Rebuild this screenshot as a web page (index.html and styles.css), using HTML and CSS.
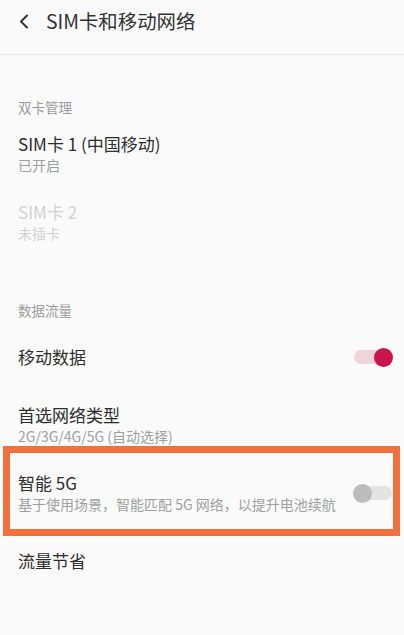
FILE: index.html
```html
<!DOCTYPE html>
<html lang="zh">
<head>
<meta charset="utf-8">
<link rel="stylesheet" href="styles.css">
</head>
<body>
<div class="screen">
  <header class="topbar">
    <svg class="back" width="10" height="15" viewBox="0 0 10 15"><path d="M8 1.5 L2 7.5 L8 13.5" fill="none" stroke="#333" stroke-width="2" stroke-linecap="round" stroke-linejoin="round"/></svg>
    <h1 class="title">SIM卡和移动网络</h1>
  </header>

  <div class="section-title">双卡管理</div>
  <div class="row">
    <div class="texts">
      <div class="label">SIM卡 1 (中国移动)</div>
      <div class="sub">已开启</div>
    </div>
  </div>
  <div class="row disabled">
    <div class="texts">
      <div class="label">SIM卡 2</div>
      <div class="sub">未插卡</div>
    </div>
  </div>

  <div class="section-title">数据流量</div>
  <div class="row single">
    <div class="texts"><div class="label">移动数据</div></div>
    <span class="switch on"><span class="knob"></span></span>
  </div>
  <div class="row">
    <div class="texts">
      <div class="label">首选网络类型</div>
      <div class="sub">2G/3G/4G/5G (自动选择)</div>
    </div>
  </div>
  <div class="row highlighted">
    <div class="texts">
      <div class="label">智能 5G</div>
      <div class="sub">基于使用场景，智能匹配 5G 网络，以提升电池续航</div>
    </div>
    <span class="switch"><span class="knob"></span></span>
  </div>
  <div class="row single">
    <div class="texts"><div class="label">流量节省</div></div>
  </div>
</div>
</body>
</html>
```

FILE: styles.css
```css
html, body {
  margin: 0;
  padding: 0;
  background: #fafafa;
}
body {
  font-family: "Noto Sans CJK SC", "Noto Sans", sans-serif;
  color: #333;
}
.screen {
  width: 404px;
  height: 635px;
  overflow: hidden;
  background: #fafafa;
}
.topbar {
  height: 55px;
  border-bottom: 1px solid #ececec;
  box-shadow: 0 1px 2px rgba(0,0,0,0.03);
  display: flex;
  align-items: center;
  padding-left: 19px;
  box-sizing: border-box;
  padding-bottom: 12px;
}
.back {
  flex: none;
  margin-right: 17px;
}
.title {
  margin: 0;
  font-size: 19.4px;
  font-weight: 400;
  color: #333;
  line-height: 24px;
}
.section-title {
  padding: 42px 18px 3px;
  font-size: 13.5px;
  line-height: 20px;
  color: #9b9b9b;
}
.section-title + .row + .row + .section-title {
  padding-top: 44px;
}
.row {
  display: flex;
  align-items: center;
  justify-content: space-between;
  padding: 13px 12px 13px 18px;
  position: relative;
}
.row.single {
  min-height: 68px;
  padding-top: 0;
  padding-bottom: 0;
  box-sizing: border-box;
}
.label {
  font-size: 17px;
  line-height: 22px;
  color: #2e2e2e;
}
.sub {
  font-size: 14px;
  line-height: 20px;
  color: #a0a0a0;
}
.disabled .label,
.disabled .sub {
  color: #d2d2d2;
}
.switch {
  flex: none;
  width: 38px;
  height: 14px;
  border-radius: 7px;
  background: #e4e4e4;
  position: relative;
}
.switch .knob {
  position: absolute;
  top: -2.5px;
  left: -1px;
  width: 19px;
  height: 19px;
  border-radius: 50%;
  background: #bcbcbc;
}
.switch.on {
  background: #f1d3dc;
}
.switch.on .knob {
  left: auto;
  right: -1px;
  background: #c9154a;
}
.highlighted::after {
  content: "";
  position: absolute;
  left: 3px;
  right: 4px;
  top: -13px;
  bottom: -9px;
  border: 7px solid #f2703c;
  pointer-events: none;
}
```
